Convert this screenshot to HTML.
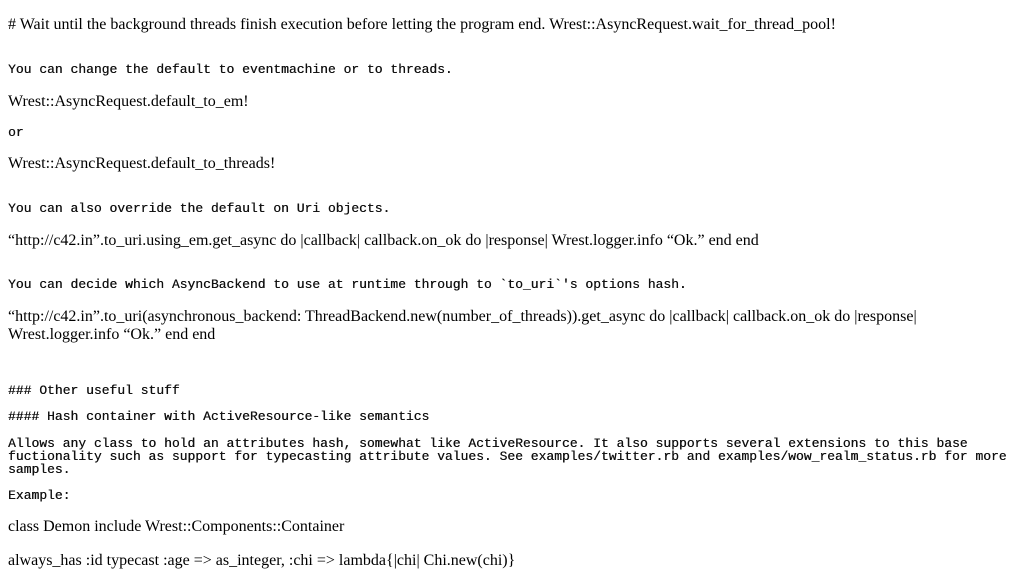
<!DOCTYPE html>
<html><head><meta charset="utf-8"><style>
html,body{margin:0;padding:0;background:#fff;width:1024px;height:586px;overflow:hidden;color:#000}
.s,.m{position:absolute;left:8px;white-space:pre;margin:0}
.s{font-family:"Liberation Serif",serif;font-size:16px;line-height:18px}
.m{font-family:"Liberation Mono",monospace;font-size:13px;line-height:13px;color:#111;text-shadow:0.3px 0 0 #111}
</style></head><body>
<div class="s" style="top:16px"># Wait until the background threads finish execution before letting the program end. Wrest::AsyncRequest.wait_for_thread_pool!</div>
<div class="m" style="top:63px">You can change the default to eventmachine or to threads.</div>
<div class="s" style="top:93px">Wrest::AsyncRequest.default_to_em!</div>
<div class="m" style="top:126px">or</div>
<div class="s" style="top:155px">Wrest::AsyncRequest.default_to_threads!</div>
<div class="m" style="top:202px">You can also override the default on Uri objects.</div>
<div class="s" style="top:232px">“http://c42.in”.to_uri.using_em.get_async do |callback| callback.on_ok do |response| Wrest.logger.info “Ok.” end end</div>
<div class="m" style="top:278px">You can decide which AsyncBackend to use at runtime through to `to_uri`'s options hash.</div>
<div class="s" style="top:308px">“http://c42.in”.to_uri(asynchronous_backend: ThreadBackend.new(number_of_threads)).get_async do |callback| callback.on_ok do |response|</div>
<div class="s" style="top:326px">Wrest.logger.info “Ok.” end end</div>
<div class="m" style="top:384px">### Other useful stuff</div>
<div class="m" style="top:410px">#### Hash container with ActiveResource-like semantics</div>
<div class="m" style="top:437px">Allows any class to hold an attributes hash, somewhat like ActiveResource. It also supports several extensions to this base
fuctionality such as support for typecasting attribute values. See examples/twitter.rb and examples/wow_realm_status.rb for more
samples.</div>
<div class="m" style="top:489px">Example:</div>
<div class="s" style="top:518px">class Demon include Wrest::Components::Container</div>
<div class="s" style="top:552px">always_has :id typecast :age =&gt; as_integer, :chi =&gt; lambda{|chi| Chi.new(chi)}</div>
</body></html>
